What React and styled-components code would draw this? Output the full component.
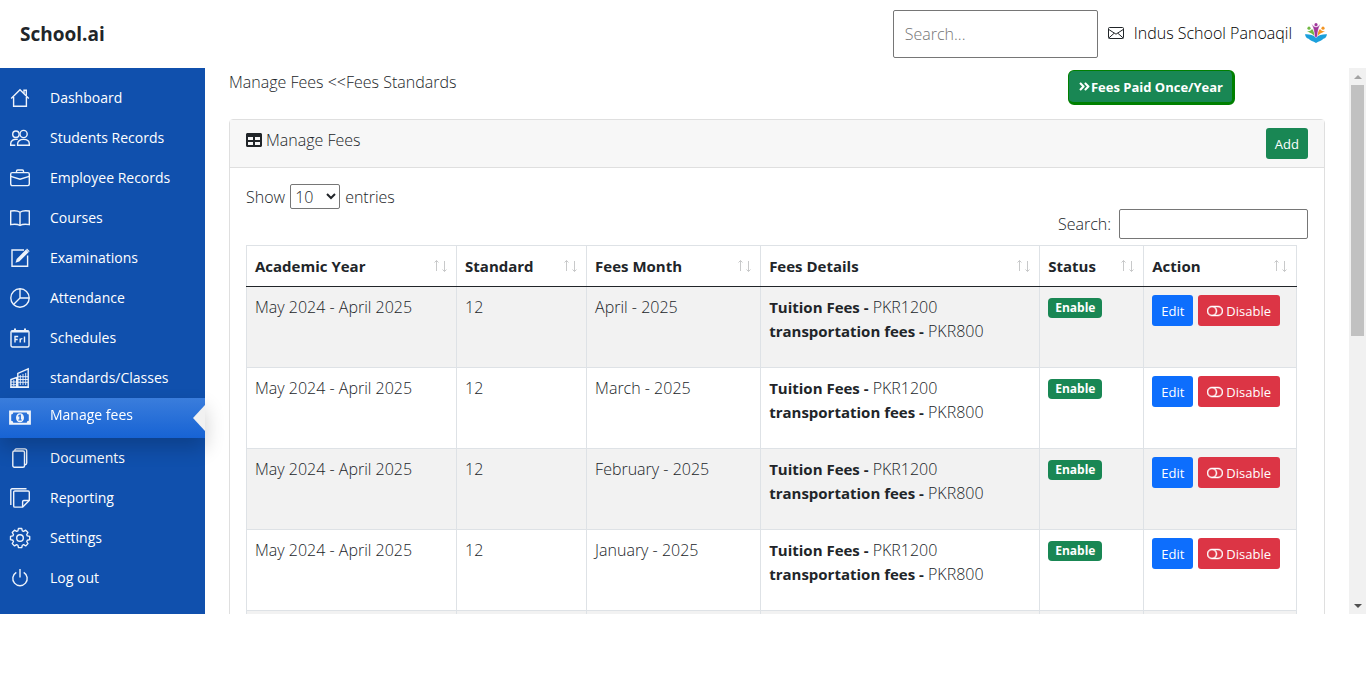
import { useState } from 'react';
import styled, { createGlobalStyle, css } from 'styled-components';
import { BsToggleOff } from 'react-icons/bs';
import { FaTable, FaAngleDoubleRight } from 'react-icons/fa';

const menu = [
  { label: 'Dashboard', icon: 'home' },
  { label: 'Students Records', icon: 'people' },
  { label: 'Employee Records', icon: 'briefcase' },
  { label: 'Courses', icon: 'book' },
  { label: 'Examinations', icon: 'edit' },
  { label: 'Attendance', icon: 'pie' },
  { label: 'Schedules', icon: 'calendar' },
  { label: 'standards/Classes', icon: 'city' },
  { label: 'Manage fees', icon: 'money', active: true },
  { label: 'Documents', icon: 'documents' },
  { label: 'Reporting', icon: 'notes' },
  { label: 'Settings', icon: 'gear' },
  { label: 'Log out', icon: 'power' },
];

const columns = [
  { title: 'Academic Year', width: 210 },
  { title: 'Standard', width: 130 },
  { title: 'Fees Month', width: 174 },
  { title: 'Fees Details', width: 279 },
  { title: 'Status', width: 104 },
  { title: 'Action', width: 153 },
];

const months = [
  'April - 2025',
  'March - 2025',
  'February - 2025',
  'January - 2025',
  'December - 2024',
];

const icons = {
  home: (
    <>
      <path d="M1.2 10.6 10 1.8l8.8 8.8" />
      <path d="M3.6 9v9.3h12.8V9" />
      <path d="M14 5.4V2.2h2.3v5.6" />
    </>
  ),
  people: (
    <>
      <circle cx="5.9" cy="6.2" r="3.2" />
      <circle cx="13.6" cy="6" r="3.6" />
      <path d="M7.6 17.3v-1.5c0-2.7 2.4-4.4 5.8-4.4s5.9 1.7 5.9 4.4v1.5z" />
      <path d="M7.8 11.4C3.6 10.6.7 12.6.7 15.6v1.7h4.6" />
    </>
  ),
  briefcase: (
    <>
      <rect x=".7" y="4.6" width="18.6" height="13" rx="1.5" />
      <path d="M6.5 4.5V3.2c0-.7.5-1.2 1.2-1.2h4.6c.7 0 1.2.5 1.2 1.2v1.3" />
      <path d="M.8 8.4 10 11.2l9.2-2.8" />
    </>
  ),
  book: (
    <path d="M10 4.2v13.3M10 4.2C8 2.7 4 2.5.7 3v13.6c3.3-.5 7.3-.3 9.3.9 2-1.2 6-1.4 9.3-.9V3C16 2.5 12 2.7 10 4.2z" />
  ),
  edit: (
    <>
      <path d="M14 2H2v16.3h15.6V7.5" />
      <path d="M5.5 14.8 6.7 11 16 1.6l2.6 2.6L9.3 13.5z" fill="currentColor" stroke="none" />
      <path d="m17 .6 2.6 2.6-.8.9-2.6-2.6z" fill="currentColor" stroke="none" />
    </>
  ),
  pie: (
    <>
      <circle cx="10" cy="10" r="9.2" />
      <path d="M10 .8V10h9.2M10 10l-6.5 6.5" />
    </>
  ),
  calendar: (
    <>
      <rect x="1" y="2.6" width="18" height="16.4" rx="1.5" />
      <path d="M1.5 3.6h17M5 .5v3M15 .5v3" strokeWidth="2" />
      <path d="M5 14.5V8.5h3.2M5 11.5h2.7M10.2 14.5v-4M10.2 11.8c.3-.9 1-1.3 2.2-1.2M14.5 8.5v6" />
    </>
  ),
  city: (
    <>
      <path d="M.9 19.2V11.6l5.8-2v9.6zM7.8 19.2V5.4L18.2.9v18.3z" />
      <path d="M.5 19.2h18.5" />
      <path d="M10.3 7v10M13 6v11M15.7 5v12M8 8.7h10M8 11.5h10M8 14.3h10M3.8 12v6M1 14h5.5M1 16.7h5.5" strokeWidth=".9" />
    </>
  ),
  money: (
    <>
      <path
        fill="currentColor"
        stroke="none"
        fillRule="evenodd"
        d="M-.9 2.5h21.8v14.3H-.9zM3.2 4.6c0 1.2-.8 2-2 2v6.1c1.2 0 2 .8 2 2h13.6c0-1.2.8-2 2-2V6.6c-1.2 0-2-.8-2-2z"
      />
      <path
        fill="currentColor"
        stroke="none"
        fillRule="evenodd"
        d="M10 5.2c2.4 0 4 1.9 4 4.5s-1.6 4.5-4 4.5-4-1.9-4-4.5 1.6-4.5 4-4.5zM10.9 6.6H9.8l-1.6 1v1.1l1.2-.5v3.4H8.3v1h3.5v-1h-.9z"
      />
    </>
  ),
  documents: (
    <>
      <rect x="2.8" y="3" width="11.7" height="16.2" rx="1.5" />
      <path d="M4.8 2.7c0-1.1.6-1.8 1.6-1.8h8.3c1.2 0 2 .8 2 2V15c0 1-.6 1.7-1.8 1.7" />
    </>
  ),
  notes: (
    <>
      <path d="M3.7 4.2c0-.7.5-1.2 1.2-1.2h13.2c.7 0 1.2.5 1.2 1.2v8.3l-6.6 6.6H4.9c-.7 0-1.2-.5-1.2-1.2z" />
      <path d="M19 12.5h-5.2c-.7 0-1.2.5-1.2 1.2V19" />
      <path d="M.8 17V2c0-.7.5-1.2 1.2-1.2h14.5" />
    </>
  ),
  gear: (
    <>
      <circle cx="10" cy="10" r="3.3" />
      <path
        d="M8.3 1h3.4l.6 2.5 1.3.6 2.2-1.3 2.4 2.4-1.3 2.2.6 1.3 2.5.6v3.4l-2.5.6-.6 1.3 1.3 2.2-2.4 2.4-2.2-1.3-1.3.6-.6 2.5H8.3l-.6-2.5-1.3-.6-2.2 1.3-2.4-2.4 1.3-2.2-.6-1.3L0 12.7V9.3l2.5-.6.6-1.3-1.3-2.2 2.4-2.4 2.2 1.3 1.3-.6z"
        strokeLinejoin="round"
        transform="translate(.5 -.5) scale(.96)"
      />
    </>
  ),
  power: (
    <>
      <path d="M10 1v8.5" />
      <path d="M6.3 4.3a7.2 7.2 0 1 0 7.4 0" />
    </>
  ),
};

function SortMark() {
  return (
    <SortIcon viewBox="0 0 16 14" aria-hidden="true">
      <path d="M4.5 12V1.5M2.5 3.5l2-2 2 2M12.5 2v10.5M10.5 10.5l2 2 2-2" />
    </SortIcon>
  );
}

function Envelope() {
  return (
    <MailIcon viewBox="0 0 16 12" aria-hidden="true">
      <rect x=".5" y=".5" width="15" height="11" rx="1" />
      <path d="M.8 2.500 8 7.200l7.200-4.700M.8 11l5.400-4.800M15.200 11 9.800 6.200" />
    </MailIcon>
  );
}

function SchoolLogo() {
  return (
    <Crest viewBox="0 0 22 20" aria-hidden="true">
      <path d="M0 11.200c4-.3 8 .6 11 3.300 3-2.700 7-3.600 11-3.300-.3 2.300-1.500 4-3.600 4.600-1.700 2.100-4.400 2.500-7.400 4.200-3-1.700-5.700-2.100-7.400-4.200C1.500 15.200.3 13.500 0 11.200z" fill="#1ba0dc" />
      <path d="M9.200 13C8.300 11.300 5.500 10 2 8.300c2.500 0 4.200-.5 5-2.300 2 2 2.500 4.500 2.200 7z" fill="#72b843" />
      <circle cx="4" cy="5.200" r="1.600" fill="#72b843" />
      <path d="M12.800 13c.9-1.700 3.700-3 7.200-4.700-2.500 0-4.200-.5-5-2.300-2 2-2.500 4.500-2.200 7z" fill="#f39422" />
      <circle cx="18" cy="5.200" r="1.600" fill="#f39422" />
      <path d="M9.600 13.500C9.500 9 8.500 4.500 6.500.8 8.300 3 9.600 4 11 4s2.700-1 4.500-3.200c-2 3.700-3 8.200-3.100 12.700L11 14.600z" fill="#a0369b" stroke="#fff" strokeWidth=".4" />
      <circle cx="11" cy="1.700" r="1.600" fill="#a0369b" />
    </Crest>
  );
}

function Sidebar() {
  return (
    <SideNav>
      {menu.map((item) => (
        <SideLink key={item.label} href="#" $active={item.active}>
          <SideIcon viewBox="0 0 20 20" aria-hidden="true">
            {icons[item.icon]}
          </SideIcon>
          <span>{item.label}</span>
        </SideLink>
      ))}
    </SideNav>
  );
}

function FeesTable() {
  return (
    <Table>
      <colgroup>
        {columns.map((col) => (
          <col key={col.title} width={col.width} />
        ))}
      </colgroup>
      <thead>
        <tr>
          {columns.map((col) => (
            <th key={col.title}>
              <HeadCell>
                {col.title}
                <SortMark />
              </HeadCell>
            </th>
          ))}
        </tr>
      </thead>
      <tbody>
        {months.map((month) => (
          <tr key={month}>
            <td>May 2024 - April 2025</td>
            <td>12</td>
            <td>{month}</td>
            <td>
              <Details>
                <li>
                  <b>Tuition Fees -</b> PKR1200
                </li>
                <li>
                  <b>transportation fees -</b> PKR800
                </li>
              </Details>
            </td>
            <td>
              <Badge>Enable</Badge>
            </td>
            <td>
              <Actions>
                <Button $color="#0d6efd">Edit</Button>
                <Button $color="#dc3545">
                  <BsToggleOff size={16} strokeWidth={0.5} /> Disable
                </Button>
              </Actions>
            </td>
          </tr>
        ))}
      </tbody>
    </Table>
  );
}

function App() {
  const [scrolled, setScrolled] = useState(0);

  function handleScroll(e) {
    const { scrollTop, scrollHeight, clientHeight } = e.currentTarget;
    setScrolled(scrollTop / (scrollHeight - clientHeight));
  }

  return (
    <>
      <GlobalStyle />
      <TopBar>
        <Brand href="#">School.ai</Brand>
        <TopSearch type="search" placeholder="Search..." aria-label="Search" />
        <Account>
          <Envelope />
          <School>Indus School Panoaqil</School>
          <SchoolLogo />
        </Account>
      </TopBar>
      <Layout>
        <Sidebar />
        <Main onScroll={handleScroll}>
          <PageHead>
            <span>Manage Fees &lt;&lt;Fees Standards</span>
            <PaidButton>
              <FaAngleDoubleRight size={13} />
              Fees Paid Once/Year
            </PaidButton>
          </PageHead>
          <Card>
            <CardHead>
              <CardTitle>
                <FaTable size={16} />
                Manage Fees
              </CardTitle>
              <Button $color="#198754">Add</Button>
            </CardHead>
            <CardBody>
              <Length>
                Show
                <select defaultValue="10">
                  <option>10</option>
                  <option>25</option>
                  <option>50</option>
                </select>
                entries
              </Length>
              <Filter>
                Search:
                <input type="search" />
              </Filter>
              <FeesTable />
            </CardBody>
          </Card>
        </Main>
        <Rail aria-hidden="true">
          <RailArrow viewBox="0 0 17 17">
            <path d="M5 11h8L9 7z" fill="#a3a3a3" />
          </RailArrow>
          <Track>
            <div style={{ flexGrow: scrolled }} />
            <Thumb />
            <div style={{ flexGrow: 1 - scrolled }} />
          </Track>
          <RailArrow viewBox="0 0 17 17">
            <path d="M5 7h8l-4 4z" fill="#505050" />
          </RailArrow>
        </Rail>
      </Layout>
    </>
  );
}

export default App;

// STYLES
const GlobalStyle = createGlobalStyle`
  * {
    box-sizing: border-box;
  }

  body {
    margin: 0;
    background: #fff;
    color: #212529;
    font-family: 'Segoe UI', 'Open Sans', 'Noto Sans', sans-serif;
    font-size: 16px;
    font-weight: 300;
    line-height: 24px;
  }

  button,
  input,
  select {
    font: inherit;
    color: inherit;
  }

  a {
    color: inherit;
    text-decoration: none;
  }
`;

const TopBar = styled.header`
  display: flex;
  align-items: center;
  height: 68px;
  padding: 0 39px 0 20px;
`;

const Brand = styled.a`
  margin-right: auto;
  font-size: 19px;
  font-weight: 700;
`;

const TopSearch = styled.input`
  width: 205px;
  height: 48px;
  margin-right: 10px;
  padding: 0 11px;
  border: 1px solid #767676;
  border-radius: 2px;

  &::placeholder {
    color: #757575;
  }
`;

const Account = styled.div`
  display: flex;
  align-items: center;
  padding-bottom: 2px;
`;

const MailIcon = styled.svg`
  width: 16px;
  height: 12px;
  fill: none;
  stroke: #212529;
`;

const School = styled.span`
  margin: 0 13px 0 10px;
  color: #000;
`;

const Crest = styled.svg`
  width: 22px;
  height: 20px;
`;

const Layout = styled.div`
  display: flex;
`;

const SideNav = styled.nav`
  flex: 0 0 205px;
  padding: 10px 0 16px;
  background: #1050ad;
`;

const SideLink = styled.a`
  display: flex;
  align-items: center;
  gap: 20px;
  height: 40px;
  padding: 0 10px;
  color: #fff;
  font-size: 14px;
  font-weight: 400;

  ${({ $active }) =>
    $active &&
    css`
      position: relative;
      background: linear-gradient(#3a7ddc, #1763d4);
      box-shadow: 0 10px 20px rgba(0, 0, 0, 0.2);

      span {
        padding-bottom: 6px;
      }

      &:after {
        content: '';
        position: absolute;
        top: 7px;
        right: 0;
        border: 13px solid transparent;
        border-left: 0;
        border-right: 12px solid #f1f1f1;
      }
    `}
`;

const SideIcon = styled.svg`
  flex: none;
  width: 20px;
  height: 20px;
  overflow: visible;
  color: #eef3fb;
  fill: none;
  stroke: currentColor;
  stroke-width: 1.4;
`;

/* the pane is as tall as the sidebar and scrolls inside */
const Main = styled.main`
  flex: 1;
  contain: size;
  min-width: 0;
  padding: 2px 24px 16px;
  background: #fff;
  overflow-x: hidden;
  overflow-y: auto;
  scrollbar-width: none;
`;

const Rail = styled.div`
  display: flex;
  flex: 0 0 17px;
  flex-direction: column;
  background: #f1f1f1;
`;

const RailArrow = styled.svg`
  flex: none;
  width: 17px;
  height: 17px;
`;

const Track = styled.div`
  display: flex;
  flex: 1;
  flex-direction: column;
  padding: 0 2px;
`;

const Thumb = styled.div`
  flex: 0 0 49%;
  background: #c1c1c1;
`;

const PageHead = styled.div`
  display: flex;
  align-items: flex-start;
  justify-content: space-between;
  margin-bottom: 14px;
  padding-right: 90px;
`;

const PaidButton = styled.button`
  display: flex;
  align-items: center;
  height: 35px;
  padding: 0 9px;
  border: solid green;
  border-width: 1px 3px 3px 1px;
  border-radius: 6px;
  background: #198754;
  color: #fff;
  font-size: 13px;
  font-weight: 700;
`;

const Card = styled.section`
  border: 1px solid #dfdfdf;
  border-radius: 4px;
`;

const CardHead = styled.div`
  display: flex;
  align-items: flex-start;
  justify-content: space-between;
  padding: 8px 16px;
  border-bottom: 1px solid #dfdfdf;
  background: #f7f7f7;
`;

const CardTitle = styled.div`
  display: flex;
  align-items: center;
  gap: 4px;
`;

const Button = styled.button`
  display: inline-flex;
  align-items: center;
  gap: 3px;
  height: 31px;
  padding: 0 9px;
  border: 0;
  border-radius: 3px;
  background: ${({ $color }) => $color};
  color: #fff;
  font-size: 13px;
  font-weight: 400;
`;

const CardBody = styled.div`
  padding: 16px;
`;

const Length = styled.label`
  display: flex;
  align-items: center;
  gap: 5px;

  select {
    width: 50px;
    height: 25px;
    border: 1px solid #767676;
    border-radius: 2px;
    background: #fff;
  }
`;

const Filter = styled.label`
  display: flex;
  align-items: center;
  justify-content: flex-end;
  gap: 8px;
  margin-bottom: 6px;

  input {
    width: 189px;
    height: 30px;
    border: 1px solid #767676;
    border-radius: 2px;
  }
`;

const Table = styled.table`
  width: 99%;
  table-layout: fixed;
  border-collapse: collapse;

  th,
  td {
    padding: 8px;
    border: 1px solid #dee2e6;
    text-align: left;
    vertical-align: top;
  }

  thead th {
    border-bottom-color: #212529;
  }

  th,
  b {
    font-size: 15px;
    font-weight: 700;
  }

  tbody tr:nth-child(odd) {
    background: #f2f2f2;
  }
`;

const HeadCell = styled.div`
  display: flex;
  align-items: center;
  justify-content: space-between;
`;

const SortIcon = styled.svg`
  width: 16px;
  height: 14px;
  fill: none;
  stroke: #c8c9ca;
`;

const Details = styled.ul`
  min-height: 64px;
  margin: 0;
  padding: 0;
  list-style: none;
`;

const Badge = styled.span`
  display: block;
  width: fit-content;
  margin-top: 3px;
  padding: 0 7px;
  border-radius: 4px;
  background: #198754;
  color: #fff;
  font-size: 12px;
  font-weight: 700;
  line-height: 20px;
`;

const Actions = styled.div`
  display: flex;
  gap: 5px;
`;
